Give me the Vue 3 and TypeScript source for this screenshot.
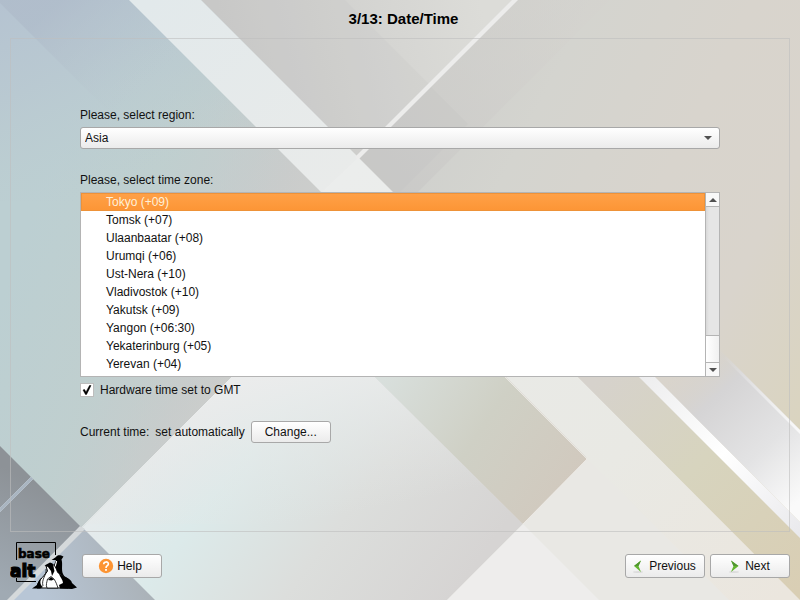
<script setup lang="ts">
import { ref } from 'vue'

const regions = ['Africa', 'America', 'Asia', 'Europe', 'Pacific']
const zones = [
  'Tokyo (+09)',
  'Tomsk (+07)',
  'Ulaanbaatar (+08)',
  'Urumqi (+06)',
  'Ust-Nera (+10)',
  'Vladivostok (+10)',
  'Yakutsk (+09)',
  'Yangon (+06:30)',
  'Yekaterinburg (+05)',
  'Yerevan (+04)',
]

const region = ref('Asia')
const zone = ref(zones[0])
const hardwareGmt = ref(true)
const list = ref<HTMLSelectElement | null>(null)

function scrollList(step: number) {
  list.value?.scrollBy({ top: step * 18 })
}
</script>

<template>
  <div class="installer">
    <svg class="backdrop" viewBox="0 0 800 600" preserveAspectRatio="none" aria-hidden="true">
      <defs>
        <linearGradient id="base" gradientUnits="userSpaceOnUse" x1="40" y1="60" x2="800" y2="440">
          <stop offset="0" stop-color="#b9c7d0" />
          <stop offset="0.13" stop-color="#bfcecf" />
          <stop offset="0.32" stop-color="#cacccb" />
          <stop offset="0.55" stop-color="#d4d4cf" />
          <stop offset="0.72" stop-color="#d8d4cd" />
          <stop offset="0.85" stop-color="#d9d4cc" />
          <stop offset="1" stop-color="#dad4bf" />
        </linearGradient>
        <linearGradient id="leftside" gradientUnits="userSpaceOnUse" x1="0" y1="300" x2="230" y2="380">
          <stop offset="0" stop-color="#bccfd2" />
          <stop offset="0.45" stop-color="#bfcfcf" stop-opacity="0.9" />
          <stop offset="1" stop-color="#c4cccd" stop-opacity="0" />
        </linearGradient>
        <linearGradient id="sky" gradientUnits="userSpaceOnUse" x1="0" y1="0" x2="90" y2="200">
          <stop offset="0" stop-color="#b5c3d1" />
          <stop offset="0.4" stop-color="#b8c7d1" stop-opacity="0.8" />
          <stop offset="1" stop-color="#bccdd1" stop-opacity="0" />
        </linearGradient>
        <linearGradient id="corner" gradientUnits="userSpaceOnUse" x1="40" y1="20" x2="120" y2="110">
          <stop offset="0" stop-color="#adb9c8" stop-opacity="0.6" />
          <stop offset="1" stop-color="#b8c6cc" stop-opacity="0" />
        </linearGradient>
        <linearGradient id="band" gradientUnits="userSpaceOnUse" x1="150" y1="0" x2="780" y2="600">
          <stop offset="0" stop-color="#e2e9eb" />
          <stop offset="0.3" stop-color="#e9ebea" />
          <stop offset="0.75" stop-color="#e9e9e4" />
          <stop offset="1" stop-color="#ebe6de" />
        </linearGradient>
        <linearGradient id="topwedge" gradientUnits="userSpaceOnUse" x1="230" y1="60" x2="480" y2="0">
          <stop offset="0" stop-color="#cacac9" />
          <stop offset="1" stop-color="#dcdcd8" />
        </linearGradient>
        <linearGradient id="rightwedge" gradientUnits="userSpaceOnUse" x1="380" y1="180" x2="560" y2="0">
          <stop offset="0" stop-color="#cacac8" />
          <stop offset="1" stop-color="#d4d2ce" stop-opacity="0.4" />
        </linearGradient>
        <linearGradient id="light" gradientUnits="userSpaceOnUse" x1="150" y1="440" x2="420" y2="640">
          <stop offset="0" stop-color="#e5ebec" />
          <stop offset="0.25" stop-color="#dceaea" />
          <stop offset="0.6" stop-color="#dcdedc" />
          <stop offset="1" stop-color="#d6d4d3" />
        </linearGradient>
        <linearGradient id="lighttop" gradientUnits="userSpaceOnUse" x1="290" y1="370" x2="320" y2="520">
          <stop offset="0" stop-color="#ebecec" />
          <stop offset="1" stop-color="#e4e6e5" stop-opacity="0" />
        </linearGradient>
        <linearGradient id="diamond" gradientUnits="userSpaceOnUse" x1="390" y1="370" x2="570" y2="490">
          <stop offset="0" stop-color="#d8dfdc" />
          <stop offset="0.5" stop-color="#cfd0c5" />
          <stop offset="1" stop-color="#d1c9be" />
        </linearGradient>
        <linearGradient id="slate" gradientUnits="userSpaceOnUse" x1="50" y1="490" x2="0" y2="590">
          <stop offset="0" stop-color="#8d9297" />
          <stop offset="1" stop-color="#a0aab3" />
        </linearGradient>
        <linearGradient id="slatelight" gradientUnits="userSpaceOnUse" x1="40" y1="600" x2="150" y2="560">
          <stop offset="0" stop-color="#b8c6d6" />
          <stop offset="1" stop-color="#a9b0b5" />
        </linearGradient>
        <linearGradient id="sand" gradientUnits="userSpaceOnUse" x1="600" y1="377" x2="800" y2="590">
          <stop offset="0" stop-color="#d6d2cc" />
          <stop offset="0.45" stop-color="#d7d4be" />
          <stop offset="1" stop-color="#d9ceb4" />
        </linearGradient>
        <linearGradient id="stripe" gradientUnits="userSpaceOnUse" x1="640" y1="377" x2="800" y2="537">
          <stop offset="0" stop-color="#ededee" />
          <stop offset="0.5" stop-color="#ffffff" />
          <stop offset="1" stop-color="#e9e9ec" />
        </linearGradient>
        <linearGradient id="glass" gradientUnits="userSpaceOnUse" x1="680" y1="370" x2="800" y2="500">
          <stop offset="0" stop-color="#d5d2ce" stop-opacity="0" />
          <stop offset="0.25" stop-color="#d5d4d5" />
          <stop offset="0.65" stop-color="#e3e3e4" />
          <stop offset="1" stop-color="#fafafa" />
        </linearGradient>
        <linearGradient id="glint" gradientUnits="userSpaceOnUse" x1="725" y1="355" x2="800" y2="430">
          <stop offset="0" stop-color="#ffffff" stop-opacity="0" />
          <stop offset="1" stop-color="#ffffff" stop-opacity="0.75" />
        </linearGradient>
      </defs>
      <rect width="800" height="600" fill="url(#base)" />
      <path d="M0 0H131L382 251V600H0Z" fill="url(#leftside)" />
      <path d="M0 0H131L332 201H0Z" fill="url(#sky)" />
      <path d="M0 3V0H131L262 131H128Z" fill="url(#corner)" />
      <path d="M201 0H516L358 157Z" fill="url(#topwedge)" />
      <path d="M345 0L430 85L358 157L201 0Z" fill="#c5c5c4" opacity="0.2" />
      <path d="M516 0H610L388 222L340 174Z" fill="url(#rightwedge)" />
      <path d="M430 86L468 124L400 192H392L358 157Z" fill="#c4c5c3" opacity="0.3" />
      <path d="M587 457L447 600H735L592 457Z" fill="#e9e8e4" />
      <path d="M129 0H201L801 600H729Z" fill="url(#band)" />
      <path d="M512 0H518L358 160L355 157Z" fill="#ececeb" />
      <path d="M358 158L392 192H322Z" fill="#f0f0f0" opacity="0.35" />
      <path d="M578 377H639L800 538V600Z" fill="url(#sand)" />
      <path d="M639 377H655L800 522V538Z" fill="url(#stripe)" />
      <path d="M655 377L701 331L800 430V522Z" fill="url(#glass)" />
      <path d="M725 355L800 430V434L721 355Z" fill="url(#glint)" />
      <path d="M232 377H375L523 524L447 600H10Z" fill="url(#light)" />
      <path d="M232 377H375L523 524L180 524L85 524Z" fill="url(#lighttop)" />
      <path d="M375 377H505L587 459L523 524Z" fill="url(#diamond)" />
      <path d="M505 377L587 459L523 524" fill="none" stroke="#f2f0ec" stroke-opacity="0.7" />
      <path d="M523 524L599 600H447Z" fill="#eeedec" />
      <path d="M0 446L82 528L10 600H0Z" fill="url(#slate)" />
      <path d="M33 479L0 512V508L31 477Z" fill="#a9b5c1" stroke="#b3bdc7" />
      <path d="M83 528L155 600H10Z" fill="url(#slatelight)" />
      <path d="M80 526L85 529L14 600H7Z" fill="#d5d9db" />
      <path d="M232 377L82 527" stroke="#f2f4f4" stroke-opacity="0.6" />
    </svg>

    <main class="screen">
      <h1 class="title">3/13: Date/Time</h1>

      <section class="panel">
        <div class="form">
          <label class="caption" for="region">Please, select region:</label>
          <div class="combo">
            <select id="region" v-model="region" class="combo-select">
              <option v-for="name in regions" :key="name">{{ name }}</option>
            </select>
            <svg class="combo-arrow" width="8" height="4" viewBox="0 0 8 4" aria-hidden="true">
              <path d="M0 0H8L4 4Z" fill="#505050" />
            </svg>
          </div>

          <label class="caption zone-caption" for="zone">Please, select time zone:</label>
          <div class="list">
            <select id="zone" ref="list" v-model="zone" class="list-select" size="10">
              <option v-for="name in zones" :key="name" class="list-item">{{ name }}</option>
            </select>
            <div class="scrollbar">
              <button class="scroll-button" type="button" aria-label="Scroll up" @click="scrollList(-1)">
                <svg width="8" height="4" viewBox="0 0 8 4"><path d="M0 4H8L4 0Z" fill="#505050" /></svg>
              </button>
              <div class="scroll-track"></div>
              <div class="scroll-thumb"></div>
              <button class="scroll-button" type="button" aria-label="Scroll down" @click="scrollList(1)">
                <svg width="8" height="4" viewBox="0 0 8 4"><path d="M0 0H8L4 4Z" fill="#505050" /></svg>
              </button>
            </div>
          </div>

          <label class="check">
            <input v-model="hardwareGmt" class="check-input" type="checkbox" />
            <svg class="check-box" width="14" height="14" viewBox="0 0 14 14" aria-hidden="true">
              <rect x="0.5" y="0.5" width="13" height="13" fill="#fff" stroke="#bdbdbd" />
              <path v-if="hardwareGmt" d="M3 7L4.500 6.500L6 9L9.500 2.500H11L6.500 11.500H5.500Z" fill="#000" stroke="#000" stroke-width="0.5" />
            </svg>
            <span>Hardware time set to GMT</span>
          </label>

          <div class="current">
            <span>Current time:</span>
            <span>set automatically</span>
            <button class="button change" type="button">Change...</button>
          </div>
        </div>
      </section>

      <footer class="footer">
        <svg class="logo" width="68" height="52" viewBox="0 0 68 52" role="img" aria-label="basealt">
          <path d="M6.500 20V2.500H45.500V15M6.500 38V41.500H26" fill="none" stroke="#000" />
          <text class="logo-base" x="8" y="18" stroke-width="0.6">base</text>
          <text class="logo-alt" x="0" y="37" stroke-width="1.2">alt</text>
          <path d="M41.500 20L46 17C47 15 50 14.500 53.500 16.500L51.500 19.500C53 24 51 29 53 34L57 41L46 38L42.500 30C43 26 45 23 46 20Z" fill="#000" />
          <path d="M46.500 21C46.500 24 44 26 45.500 29" fill="none" stroke="#fff" stroke-width="1.2" />
          <path d="M36 26L42 24C45 25 46 28 47.500 32C50 36 59 37 60.500 43L58 48H27C27 41 33 38 37.500 31Z" fill="#fff" stroke="#000" />
          <path d="M34.500 25.500L40 22.500C44 23 43.500 28 44.500 31L42 36L41 31L38 27Z" fill="#000" />
          <path d="M22 48.500L27 45C28 42 29 40 31 38C30 42 30 45 33 47L30 48.500Z" fill="#000" />
          <path d="M49 34C54 37 61 38 62 43L67 47.500L62 49L50 48.500L49 45L53 43C53 40 50 37 49 34Z" fill="#000" />
          <path d="M37 48C35.500 45 37 42 37.500 39L41 36.500L44 39C46 42 47 45 48 48Z" fill="#fff" stroke="#000" stroke-width="0.8" />
          <path d="M38 40L41 37L44 39.500L41.500 40.500Z" fill="#000" />
          <path d="M36 29C37 35 31 39 33 46" fill="none" stroke="#000" stroke-width="0.8" />
        </svg>
        <button class="button help" type="button">
          <svg width="16" height="16" viewBox="0 0 16 16" aria-hidden="true">
            <circle cx="8" cy="8" r="7.200" fill="#fc9433" />
            <path d="M5.700 6.200C5.700 3.200 10.400 3.200 10.400 6C10.400 7.800 8 7.700 8 9.900" fill="none" stroke="#fff" stroke-width="1.600" />
            <rect x="7.100" y="11" width="1.800" height="1.800" fill="#fff" />
          </svg>
          Help
        </button>
        <div class="nav">
          <button class="button previous" type="button">
            <svg width="16" height="16" viewBox="0 0 16 16" aria-hidden="true">
              <ellipse cx="8" cy="14" rx="5" ry="1" fill="#000" opacity="0.08" />
              <path d="M11 2.500L4 8L11 14L8.500 8Z" fill="#62b52f" />
              <path d="M11 2.500L4 8H8.500Z" fill="#50962f" />
            </svg>
            Previous
          </button>
          <button class="button next" type="button">
            <svg width="16" height="16" viewBox="0 0 16 16" aria-hidden="true">
              <ellipse cx="8" cy="14" rx="5" ry="1" fill="#000" opacity="0.08" />
              <path d="M5 2.500L12.500 8L5 14L7.500 8Z" fill="#62b52f" />
              <path d="M5 2.500L12.500 8H7.500Z" fill="#50962f" />
            </svg>
            Next
          </button>
        </div>
      </footer>
    </main>
  </div>
</template>

<style>
body {
  margin: 0;
}
</style>

<style scoped>
.installer {
  position: relative;
  min-height: 100vh;
  display: flex;
  font-family: "Liberation Sans", Arial, sans-serif;
  font-size: 12px;
  line-height: 14px;
  color: #111;
}

.backdrop {
  position: absolute;
  inset: 0;
  width: 100%;
  height: 100%;
}

.screen {
  position: relative;
  flex: 1;
  display: flex;
  flex-direction: column;
  padding: 10px 10px 8px;
  box-sizing: border-box;
}

.title {
  margin: 0;
  padding: 0 0 10px 7px;
  font-size: 15px;
  line-height: 18px;
  text-align: center;
  color: #000;
}

.panel {
  flex: 1;
  border: 1px solid rgba(190, 190, 190, 0.6);
  padding: 69px;
}

.form {
  display: flex;
  flex-direction: column;
}

.caption {
  padding-bottom: 5px;
}

.zone-caption {
  padding-top: 24px;
}

.combo {
  display: grid;
  align-items: center;
}

.combo-select,
.combo-arrow {
  grid-area: 1 / 1;
}

.combo-select {
  appearance: none;
  height: 22px;
  margin: 0;
  padding: 0 4px;
  border: 1px solid #a8a8a8;
  border-radius: 3px;
  background: linear-gradient(#fff, #ebebeb);
  font: inherit;
  color: inherit;
}

.combo-arrow {
  justify-self: end;
  margin-right: 8px;
  pointer-events: none;
}

.list {
  display: flex;
  border: 1px solid #b4b4b4;
  background: #fff;
}

.list-select {
  flex: 1;
  height: 183px;
  margin: 0;
  padding: 0;
  border: 0;
  border-radius: 0;
  outline: 0;
  overflow: hidden;
  background: #fff;
  font: inherit;
  color: inherit;
}

.list-item {
  height: 18px;
  min-height: 18px;
  padding: 2px 0 0 25px;
  box-sizing: border-box;
}

.list-item:checked {
  background: linear-gradient(#ffa148, #fc9535);
  box-shadow: inset 0 0 0 1px #ee9238;
  color: #fff0d8;
}

.scrollbar {
  display: flex;
  flex-direction: column;
  width: 13px;
  border-left: 1px solid #b4b4b4;
}

.scroll-button {
  display: flex;
  align-items: center;
  justify-content: center;
  height: 13px;
  padding: 0;
  border: 0;
  background: #f8f8f8;
}

.scroll-track {
  flex: 1;
  border-top: 1px solid #b4b4b4;
  background: linear-gradient(90deg, #d8d8d8, #e5e5e5 3px, #e5e5e5);
}

.scroll-thumb {
  height: 26px;
  border: solid #b4b4b4;
  border-width: 1px 0;
  background: linear-gradient(90deg, #fff, #f0f0f0);
}

.check {
  display: flex;
  align-items: center;
  gap: 6px;
  padding-top: 6px;
}

.check-input {
  appearance: none;
  width: 0;
  height: 0;
  margin: 0 -6px 0 0;
}

.check-input:focus-visible + .check-box {
  outline: 1px solid #fc9433;
}

.current {
  display: flex;
  align-items: center;
  gap: 6px;
  padding-top: 24px;
}

.button {
  display: flex;
  align-items: center;
  justify-content: center;
  gap: 3px;
  width: 80px;
  height: 24px;
  padding: 0 4px 0 0;
  border: 1px solid #a8a8a8;
  border-radius: 3px;
  background: linear-gradient(#fff, #ebebeb);
  font: inherit;
  color: inherit;
}

.change {
  height: 22px;
  padding: 0;
}

.footer {
  display: flex;
  align-items: center;
  gap: 4px;
  padding-top: 8px;
}

.logo-base,
.logo-alt {
  font-family: "DejaVu Sans", sans-serif;
  font-weight: 700;
  stroke: #000;
}

.logo-base {
  font-size: 12px;
}

.logo-alt {
  font-size: 17px;
}

.nav {
  display: flex;
  gap: 5px;
  margin-left: auto;
}
</style>
